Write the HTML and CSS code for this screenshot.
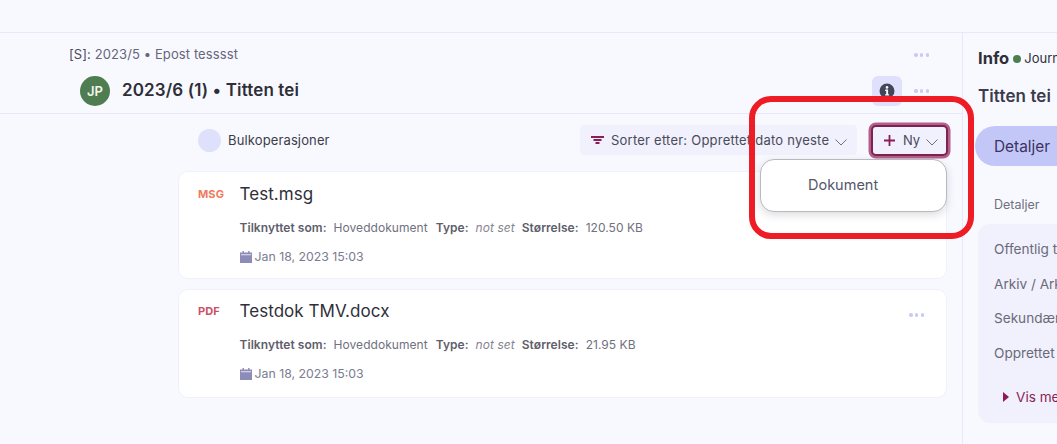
FILE: index.html
```html
<!DOCTYPE html>
<html lang="no">
<head>
<meta charset="utf-8">
<title>Dokumenter</title>
<link rel="stylesheet" href="styles.css">
</head>
<body>
<div class="topbar"></div>
<div class="layout">
  <main class="main">
    <header class="header">
      <div class="parent-row">
        <span class="parent-text"><span class="parent-tag">[S]:</span> 2023/5 • Epost tesssst</span>
        <span class="dots"><i></i><i></i><i></i></span>
      </div>
      <div class="title-row">
        <span class="avatar">JP</span>
        <h1 class="title">2023/6 (1) • Titten tei</h1>
        <span class="info-btn">
          <svg width="18" height="18" viewBox="0 0 18 18"><circle cx="9" cy="9" r="7.5" fill="#43455a"/><circle cx="9" cy="5.4" r="1.3" fill="#f8f9ff"/><path d="M7.2 7.6h2.9v4.6h1v1.4H7.1v-1.4h1.1V9H7.2z" fill="#f8f9ff"/></svg>
        </span>
        <span class="dots"><i></i><i></i><i></i></span>
      </div>
    </header>
    <section class="content">
      <div class="toolbar">
        <span class="bulk-check"></span>
        <span class="bulk-label">Bulkoperasjoner</span>
        <button class="sort-btn">
          <svg width="13" height="8" viewBox="0 0 13 8"><path d="M0 0h13v2H0zM2.5 3h8v2h-8zM4.5 6h4v2h-4z" fill="#8c1d57"/></svg>
          <span>Sorter etter: Opprettet dato nyeste</span>
          <svg class="chev" width="12" height="7" viewBox="0 0 12 7"><path d="M.5.5l5.5 5.5L11.5.5" fill="none" stroke="#6e7080" stroke-width="1"/></svg>
        </button>
        <button class="new-btn">
          <svg width="11" height="11" viewBox="0 0 11 11"><path d="M4.6 0h1.8v4.6H11v1.8H6.4V11H4.6V6.4H0V4.6h4.6z" fill="#8c1d57"/></svg>
          <span>Ny</span>
          <svg class="chev" width="12" height="7" viewBox="0 0 12 7"><path d="M.5.5l5.5 5.5L11.5.5" fill="none" stroke="#6e7080" stroke-width="1"/></svg>
        </button>
      </div>
      <article class="card">
        <div class="file-type msg">MSG</div>
        <div class="card-body">
          <div class="file-name">Test.msg</div>
          <div class="meta"><b>Tilknyttet som:</b><span>Hoveddokument</span><b>Type:</b><em>not set</em><b>Størrelse:</b><span>120.50 KB</span></div>
          <div class="date">
            <svg width="12" height="12" viewBox="0 0 12 12"><path d="M2.5 0h1.4v1.4h4.2V0h1.4v1.4H12V12H0V1.4h2.5z" fill="#8d8bb8"/><path d="M1 3.4h10v.8H1z" fill="#f8f9ff"/></svg>
            Jan 18, 2023 15:03
          </div>
        </div>
        <span class="dots card-dots"><i></i><i></i><i></i></span>
      </article>
      <article class="card card-second">
        <div class="file-type pdf">PDF</div>
        <div class="card-body">
          <div class="file-name">Testdok TMV.docx</div>
          <div class="meta"><b>Tilknyttet som:</b><span>Hoveddokument</span><b>Type:</b><em>not set</em><b>Størrelse:</b><span>21.95 KB</span></div>
          <div class="date">
            <svg width="12" height="12" viewBox="0 0 12 12"><path d="M2.5 0h1.4v1.4h4.2V0h1.4v1.4H12V12H0V1.4h2.5z" fill="#8d8bb8"/><path d="M1 3.4h10v.8H1z" fill="#f8f9ff"/></svg>
            Jan 18, 2023 15:03
          </div>
        </div>
        <span class="dots card-dots"><i></i><i></i><i></i></span>
      </article>
    </section>
    <div class="menu"><span>Dokument</span></div>
  </main>
  <aside class="side">
    <div class="side-head"><b>Info</b><i class="status"></i><span>Journalført</span></div>
    <div class="side-title">Titten tei</div>
    <div class="tabs"><span class="tab">Detaljer</span></div>
    <div class="side-label">Detaljer</div>
    <div class="panel">
      <div>Offentlig tittel</div>
      <div>Arkiv / Arkivdel</div>
      <div>Sekundærklassering</div>
      <div>Opprettet av</div>
      <div class="more"><svg width="6" height="10" viewBox="0 0 6 10"><path d="M0 0l6 5-6 5z" fill="#8c1d57"/></svg>Vis mer</div>
    </div>
  </aside>
</div>
<div class="callout"></div>
</body>
</html>
```
FILE: styles.css
```css
* { box-sizing: border-box; }
html, body { margin: 0; height: 100%; overflow: hidden; }
body {
  position: relative;
  width: 1057px;
  height: 444px;
  background: #f8f9ff;
  font-family: Inter, "Liberation Sans", sans-serif;
  color: #2f2f3a;
}
.topbar { height: 33px; border-bottom: 1px solid #e8e8fa; }
.layout { display: flex; height: 411px; }
.main { position: relative; width: 963px; flex: none; border-right: 1px solid #e8e8fa; }
.header { height: 81px; border-bottom: 1px solid #e8e8fa; }
.parent-row { display: flex; align-items: center; padding: 13px 33px 0 69px; height: 31px; }
.parent-text { flex: 1; font-size: 13px; letter-spacing: .1px; color: #65667a; margin-bottom: 2px; }
.parent-tag { color: #4a4a58; }
.title-row { display: flex; align-items: center; padding: 0 33px 0 80px; height: 30px; margin-top: 12px; }
.avatar {
  width: 30px; height: 30px; border-radius: 50%;
  background: #4f7d52; color: #f4f7ee;
  display: flex; align-items: center; justify-content: center;
  font-size: 13px; font-weight: 600;
}
.title { flex: 1; margin: 0 0 2px 12px; font-size: 17px; letter-spacing: .13px; font-weight: 600; color: #2e2e38; }
.info-btn {
  width: 30px; height: 30px; border-radius: 6px; background: #dfe0fb;
  display: flex; align-items: center; justify-content: center; margin-right: 12px;
}
.dots { display: flex; gap: 2.25px; width: 15px; flex: none; }
.dots i { width: 3.5px; height: 3.5px; border-radius: 50%; background: #c8caf5; flex: none; }
.content { padding: 9px 15px 0 178px; }
.toolbar { display: flex; align-items: center; height: 34px; margin: 0 -1px 14px 0; }
.bulk-check { width: 23px; height: 23px; margin-left: 20px; border-radius: 50%; background: #dfe0fb; }
.bulk-label { flex: 1; margin-left: 7px; font-size: 13px; letter-spacing: .13px; color: #3c3c4a; }
.sort-btn, .new-btn {
  display: flex; align-items: center; border: 0;
  font-family: inherit; font-size: 13px; color: #4a4a58;
}
.sort-btn { width: 277px; height: 30px; padding: 0 0 0 11px; background: #f0f1fd; border-radius: 4px; margin-right: 14px; letter-spacing: .23px; }
.sort-btn span { margin-left: 7px; }
.sort-btn .chev { margin-left: 6px; margin-top: 4px; }
.new-btn {
  width: 77px; height: 31px; padding: 0 0 0 11px; background: #f0f1fd;
  border-radius: 5px; border: 2px solid #7d2352;
  box-shadow: 0 0 0 2.5px #b45f8b;
}
.new-btn span { margin-left: 8px; }
.new-btn .chev { margin-left: 6px; margin-top: 4px; }
.card {
  display: flex; height: 108px; background: #fff;
  border: 1px solid #f1f1fb; border-radius: 10px;
  padding: 12px 0 0 19px; position: relative;
}
.card-second { margin-top: 10px; height: 109px; padding-top: 11px; }
.file-type { width: 41.5px; font-size: 11px; letter-spacing: .1px; font-weight: 700; line-height: 20px; }
.msg { color: #f07a5c; }
.pdf { color: #cb4f68; }
.file-name { font-size: 17px; letter-spacing: .05px; line-height: 20px; color: #2f2f3a; }
.meta { display: flex; margin-top: 16px; font-size: 12px; letter-spacing: .05px; line-height: 16px; color: #707080; }
.meta b { font-weight: 600; margin-right: 7px; color: #5e5e6c; }
.meta span { margin-right: 8px; }
.meta em { margin-right: 7px; color: #85858f; }
.date { display: flex; align-items: center; gap: 3px; margin-top: 13px; font-size: 12.3px; line-height: 16px; color: #7b7c90; }
.card-dots { position: absolute; right: 22px; top: 23px; }
.menu {
  position: absolute; left: 760px; top: 126px; width: 187px; height: 53px;
  display: flex; align-items: center; padding: 0 0 2px 47px;
  background: #fff; border: 1px solid #b8b8bf; border-radius: 14px;
  box-shadow: 0 3px 8px rgba(60, 60, 80, .18);
  font-size: 14.5px; color: #55566a;
}
.callout {
  position: absolute; left: 749px; top: 96px; width: 225px; height: 143px;
  border: 6px solid #ee1c25; border-radius: 22px;
}
.side { flex: 1; padding-left: 15px; min-width: 0; white-space: nowrap; overflow: hidden; }
.side-head { display: flex; align-items: center; height: 20px; margin-top: 15px; font-size: 13px; color: #2f2f3a; }
.side-head b { font-size: 16.5px; font-weight: 700; flex: none; }
.side-head span { flex: none; }
.status { width: 8px; height: 8px; border-radius: 50%; background: #4f7d52; margin: 2px 3px 0 4px; flex: none; }
.side-title { margin-top: 17px; font-size: 17px; letter-spacing: .1px; font-weight: 600; line-height: 22px; color: #3b3b4d; }
.tabs { margin: 19px 0 0 -3px; height: 40px; }
.tab {
  display: flex; align-items: center; height: 40px; padding: 0 19px; width: 100px;
  border-radius: 20px 0 0 20px; background: #c3c7f8; font-size: 15.4px; color: #3b3360;
}
.side-label { margin: 31px 0 0 16px; font-size: 12.5px; line-height: 16px; color: #70707e; }
.panel {
  margin: 11px 0 0 0; height: 199px; padding: 8px 0 0 16px;
  background: #f0f1fd; border-radius: 12px 0 0 12px;
  font-size: 13.6px; color: #6a6a78;
}
.panel div { height: 34.7px; line-height: 34.7px; }
.panel .more { display: flex; align-items: center; gap: 7px; margin: 9px 0 0 9px; color: #8c1d57; }
.panel .more svg { flex: none; }
```
